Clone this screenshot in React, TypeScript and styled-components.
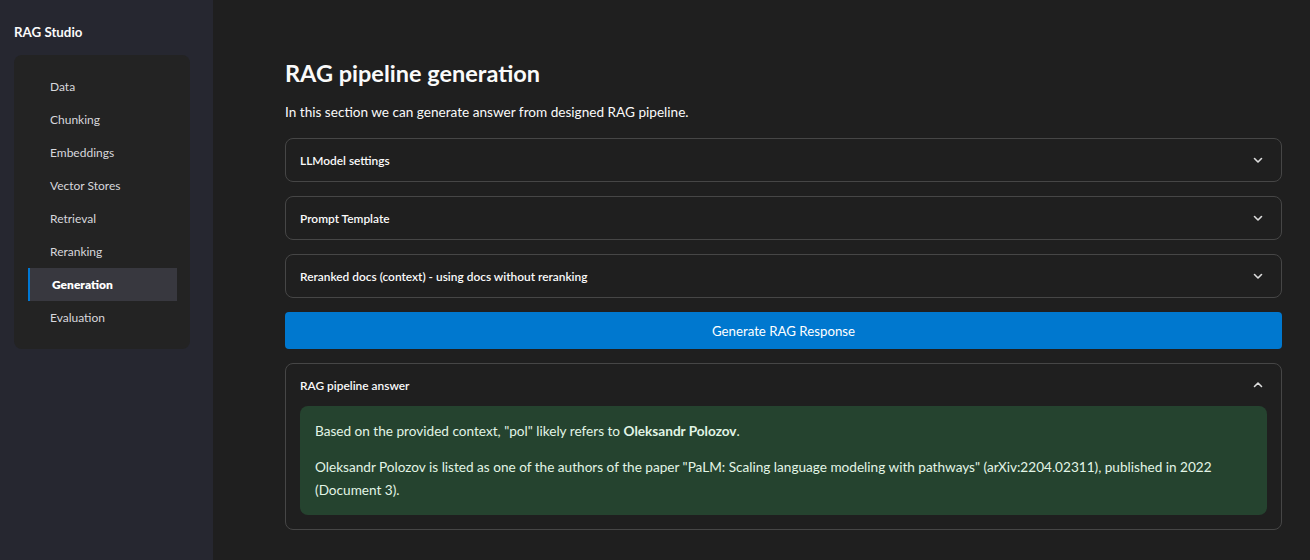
import React from "react";
import styled, { createGlobalStyle } from "styled-components";

const Global = createGlobalStyle`
  html, body { margin: 0; padding: 0; background: #1f1f1f; }
  body { font-family: "Lato", "Liberation Sans", sans-serif; color: #fafafa; }
  * { box-sizing: border-box; }
`;

const Layout = styled.div`
  display: flex;
  width: 1310px;
  height: 560px;
  overflow: hidden;
`;

const Sidebar = styled.aside`
  width: 213px;
  flex: none;
  background: #262730;
  padding: 24px 23px 0 14px;
`;

const Brand = styled.div`
  font-size: 13.3px;
  font-weight: 700;
  color: #fafafa;
  height: 16px;
  line-height: 16px;
  margin-bottom: 15px;
`;

const NavCard = styled.nav`
  background: #232323;
  border-radius: 8px;
  padding: 15px 13px 15px 14px;
  display: flex;
  flex-direction: column;
  width: 176px;
`;

const NavItem = styled.div<{ $active?: boolean }>`
  height: 33px;
  display: flex;
  align-items: center;
  padding-left: ${(p) => (p.$active ? "22px" : "20px")};
  font-size: 12px;
  font-weight: ${(p) => (p.$active ? 800 : 400)};
  color: ${(p) => (p.$active ? "#ffffff" : "#d7d7dc")};
  background: ${(p) => (p.$active ? "#38383f" : "transparent")};
  border-left: 2px solid ${(p) => (p.$active ? "#0078d4" : "transparent")};
`;

const Main = styled.main`
  flex: 1;
  padding: 58px 28px 0 72px;
  display: flex;
  flex-direction: column;
`;

const Title = styled.h1`
  margin: 0;
  font-size: 23.5px;
  font-weight: 700;
  line-height: 30px;
  color: #fafafa;
`;

const Subtitle = styled.p`
  margin: 14px 0 16px;
  font-size: 13.6px;
  line-height: 20px;
  color: #fafafa;
`;

const Stack = styled.div`
  display: flex;
  flex-direction: column;
  gap: 14px;
`;

const Expander = styled.section`
  border: 1px solid #464646;
  border-radius: 8px;
`;

const ExpanderHead = styled.div`
  height: 42px;
  display: flex;
  align-items: center;
  justify-content: space-between;
  padding: 0 17px 0 14px;
  font-size: 11.9px;
  font-weight: 600;
  color: #fafafa;
`;

const Chevron = styled.svg`
  width: 12px;
  height: 12px;
`;

const Button = styled.button`
  height: 37px;
  border: none;
  border-radius: 4px;
  background: #0078cf;
  color: #ffffff;
  font-family: inherit;
  font-size: 13.25px;
  padding: 0;
`;

const ExpanderBody = styled.div`
  padding: 0 14px 14px 14px;
`;

const Success = styled.div`
  background: #25432f;
  border-radius: 8px;
  padding: 14px 15px 13px;
  color: #e2f5e6;
  font-size: 13.6px;
  line-height: 23px;
  p { margin: 0 0 13px; }
  p:last-child { margin-bottom: 0; }
  b { font-weight: 700; }
`;

const Down = () => (
  <Chevron viewBox="0 0 12 12" fill="none">
    <path d="M2.5 4.5 L6 8 L9.5 4.5" stroke="#dcdcdc" strokeWidth="1.6" strokeLinecap="round" strokeLinejoin="round" />
  </Chevron>
);

const Up = () => (
  <Chevron viewBox="0 0 12 12" fill="none">
    <path d="M2.5 7.5 L6 4 L9.5 7.5" stroke="#dcdcdc" strokeWidth="1.6" strokeLinecap="round" strokeLinejoin="round" />
  </Chevron>
);

const navItems = ["Data", "Chunking", "Embeddings", "Vector Stores", "Retrieval", "Reranking", "Generation", "Evaluation"];

export default function App() {
  return (
    <>
      <Global />
      <Layout>
        <Sidebar>
          <Brand>RAG Studio</Brand>
          <NavCard>
            {navItems.map((n) => (
              <NavItem key={n} $active={n === "Generation"}>
                {n}
              </NavItem>
            ))}
          </NavCard>
        </Sidebar>
        <Main>
          <Title>RAG pipeline generation</Title>
          <Subtitle>In this section we can generate answer from designed RAG pipeline.</Subtitle>
          <Stack>
            <Expander>
              <ExpanderHead>
                LLModel settings
                <Down />
              </ExpanderHead>
            </Expander>
            <Expander>
              <ExpanderHead>
                Prompt Template
                <Down />
              </ExpanderHead>
            </Expander>
            <Expander>
              <ExpanderHead>
                Reranked docs (context) - using docs without reranking
                <Down />
              </ExpanderHead>
            </Expander>
            <Button>Generate RAG Response</Button>
            <Expander>
              <ExpanderHead>
                RAG pipeline answer
                <Up />
              </ExpanderHead>
              <ExpanderBody>
                <Success>
                  <p>
                    Based on the provided context, "pol" likely refers to <b>Oleksandr Polozov</b>.
                  </p>
                  <p>
                    Oleksandr Polozov is listed as one of the authors of the paper "PaLM: Scaling language modeling with
                    pathways" (arXiv:2204.02311), published in 2022 (Document 3).
                  </p>
                </Success>
              </ExpanderBody>
            </Expander>
          </Stack>
        </Main>
      </Layout>
    </>
  );
}
